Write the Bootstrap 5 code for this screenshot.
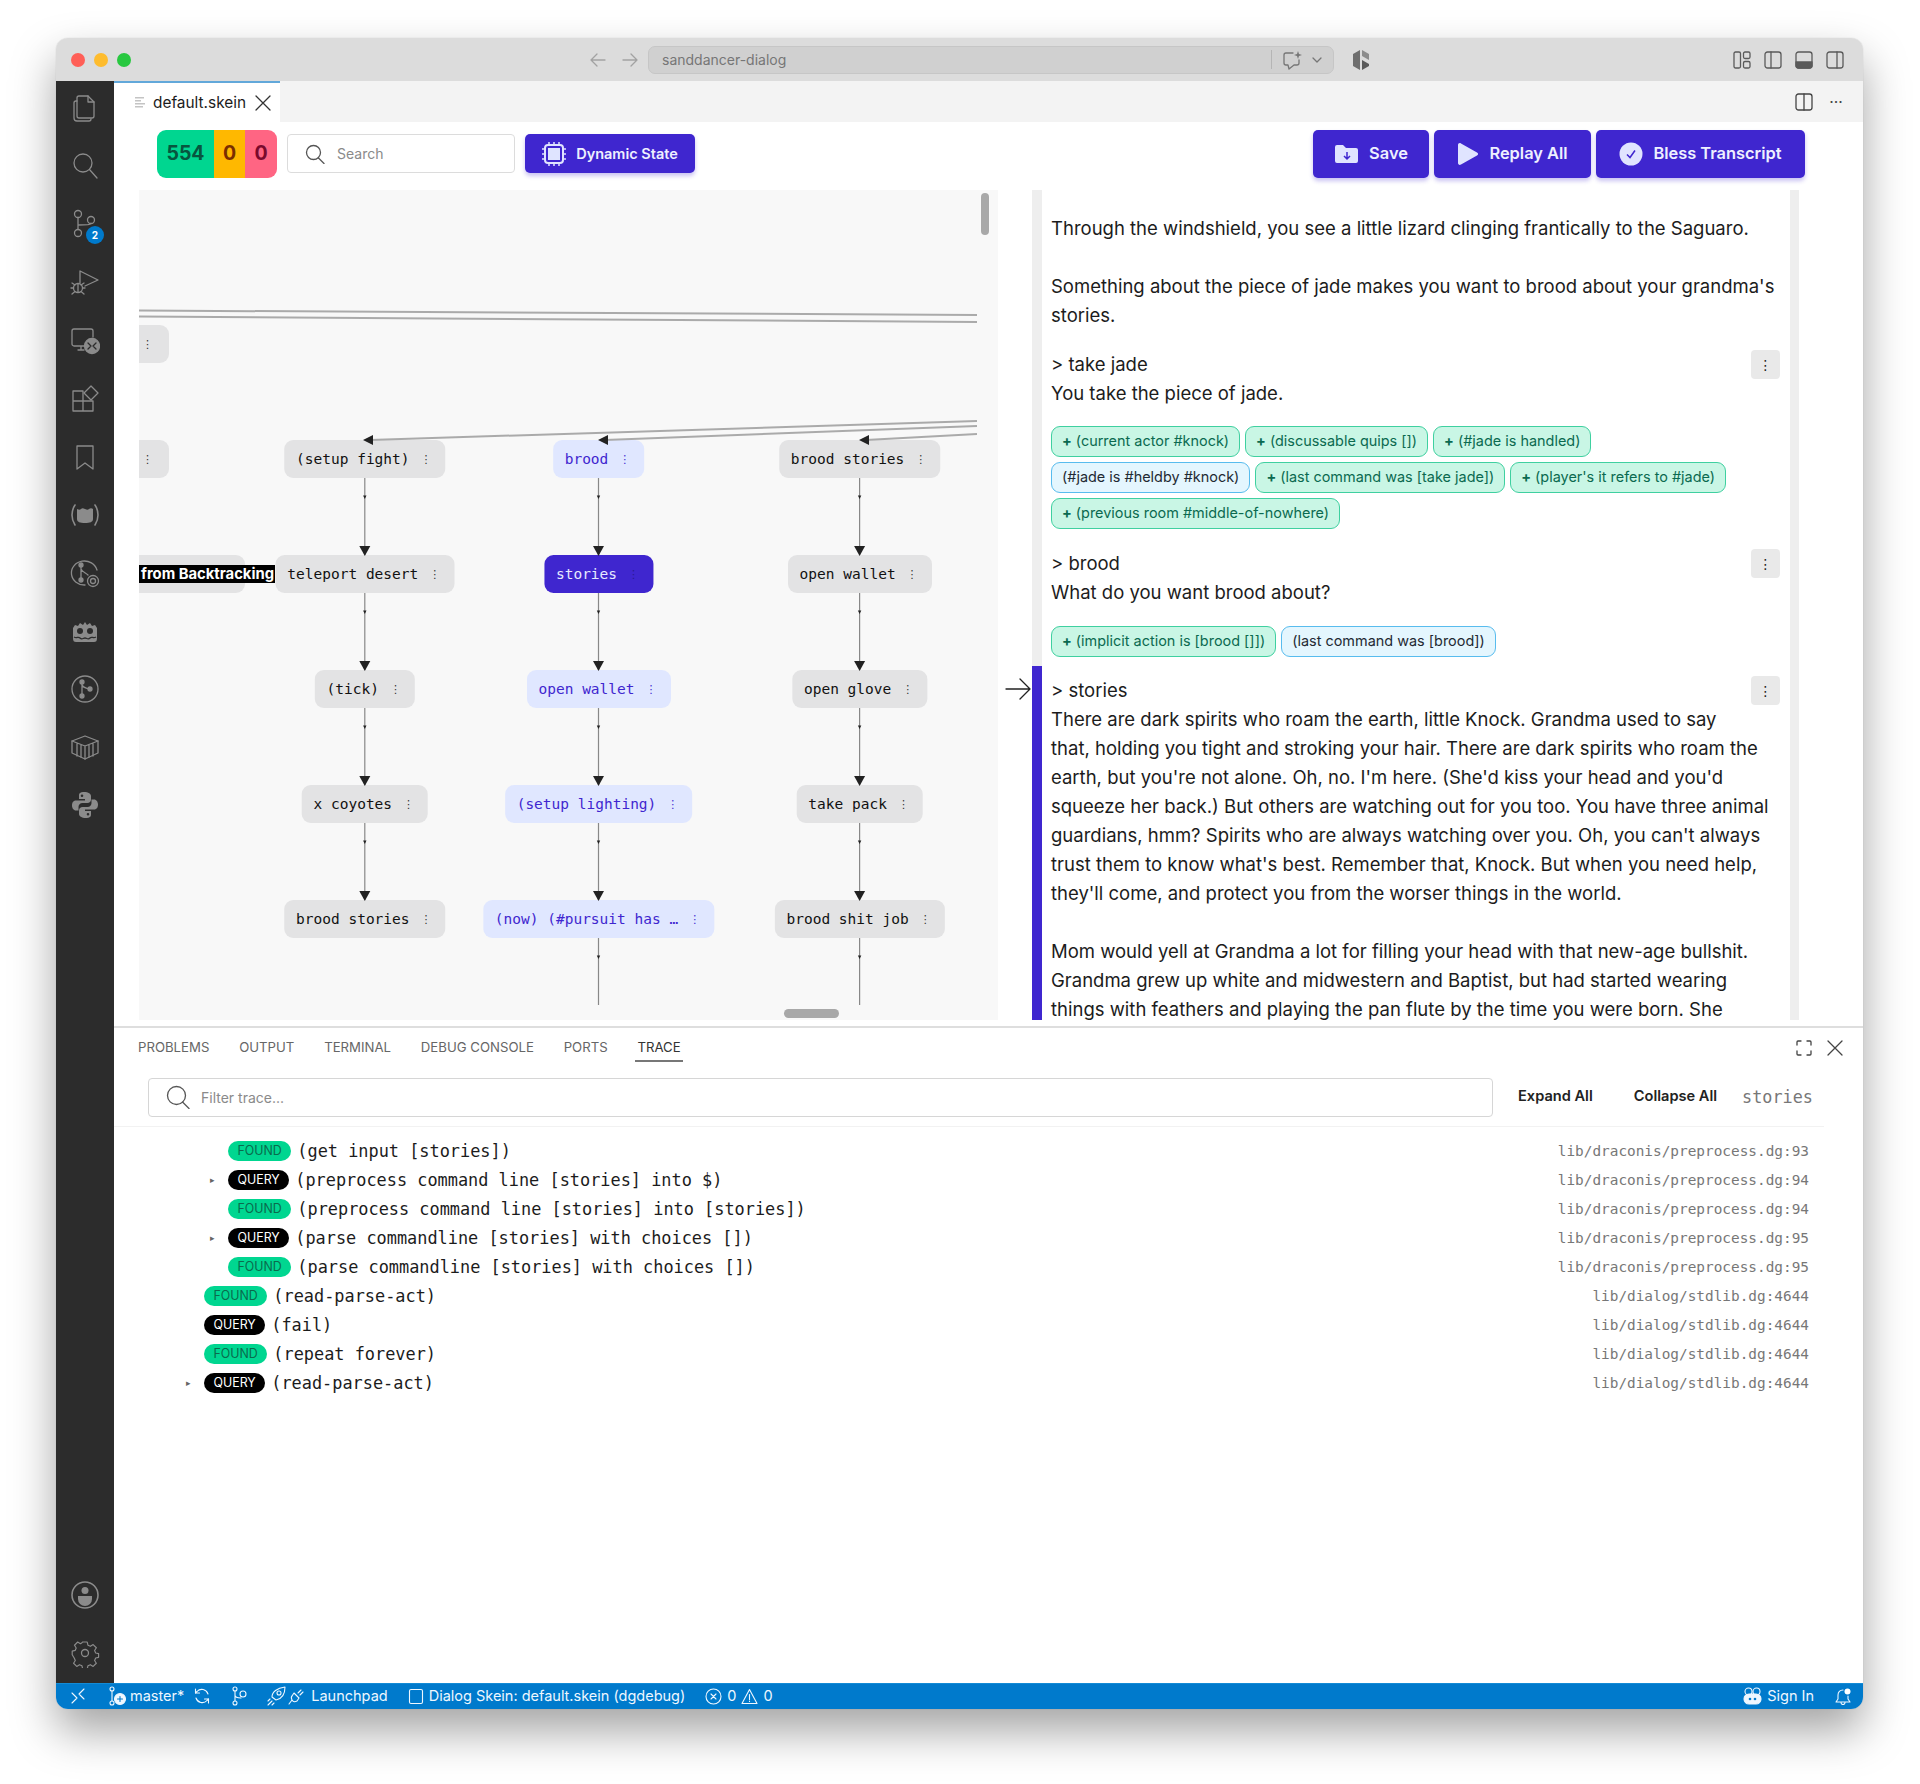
<!DOCTYPE html>
<html lang="en">
<head>
  <meta charset="UTF-8">
  <meta name="viewport" content="width=device-width, initial-scale=1.0">
  <title>default.skein</title>
  <link rel="stylesheet" href="https://cdn.jsdelivr.net/npm/bootstrap@5.3.0/dist/css/bootstrap.min.css">
  <style>
    html, body { height: 100%; background: #fff; }
    body { font-family: Inter, "Liberation Sans", sans-serif; color: #1c1c1c; padding: 38px 57px 0 56px; overflow: hidden; }

    .app-window { width: 1807px; height: 1671px; border-radius: 12px; overflow: hidden; background: #fff; box-shadow: 0 22px 45px rgba(0,0,0,.36), 0 0 1px rgba(0,0,0,.25); }
    .line-ico { fill: none; stroke: currentColor; stroke-width: 1.3; stroke-linecap: round; stroke-linejoin: round; flex: none; }

    /* title bar */
    .title-bar { height: 43px; background: #dcdcdc; color: #6d6d6d; flex: none; }
    .light { width: 14px; height: 14px; border-radius: 50%; }
    .light-r { background: #ff5f57; margin-left: 15px; }
    .light-y { background: #febc2e; margin-left: 9px; }
    .light-g { background: #28c840; margin-left: 9px; }
    .nav-arrows { margin-left: 458px; gap: 14px; color: #a2a2a2; }
    .title-search { width: 686px; height: 28px; margin-left: 9px; background: #d0d0d0; border: 1px solid #c6c6c6; border-radius: 7px; font-size: 14px; color: #767676; padding: 0 10px 0 13px; }
    .title-sep { width: 1px; height: 19px; background: #b5b5b5; margin-left: auto; margin-right: 9px; }
    .title-logo { margin-left: 18px; }
    .layout-icons { margin-left: auto; margin-right: 19px; gap: 13px; color: #5a5a5a; }

    /* activity bar */
    .activity-bar { width: 58px; background: #2c2c2c; color: #8b8b8b; flex: none; padding-top: 0; }
    .act-item { height: 58.1px; display: flex; align-items: center; justify-content: center; position: relative; }
    .act-item:first-child { margin-top: -2px; }
    .act-badge { position: absolute; left: 30px; top: 31px; width: 18px; height: 18px; border-radius: 50%; background: #007acc; color: #fff; font-size: 10px; font-weight: 700; display: flex; align-items: center; justify-content: center; }

    /* tabs + toolbar */
    .tab-row { height: 41px; background: #f3f3f3; flex: none; }
    .file-tab { width: 166px; background: #fff; border-top: 2px solid #62a8da; font-size: 15.4px; padding-left: 21px; gap: 7px; }
    .tool-row { height: 68px; padding: 0 58px 5px 43px; flex: none; }
    .counter { height: 48px; border-radius: 9px; overflow: hidden; font-weight: 700; font-size: 19.5px; }
    .counter span { display: flex; align-items: center; justify-content: center; }
    .cnt-ok { width: 57px; background: #00d690; color: #07563f; }
    .cnt-warn { width: 31px; background: #ffb800; color: #7a2e00; }
    .cnt-bad { width: 32px; background: #ff6583; color: #7a0a2c; }
    .tool-search { width: 228px; height: 39px; margin-left: 10px; border: 1px solid #dcdcdc; border-radius: 4px; padding-left: 17px; gap: 12px; font-size: 14px; color: #8a8a8a; }
    .prim-btn.btn { background: #3f26cf; border: 0; color: #eef0ff; border-radius: 5px; box-shadow: 0 3px 4px rgba(63,38,207,.28); display: flex; align-items: center; justify-content: center; font-weight: 600; padding: 0; }
    .btn-state.btn { width: 170px; height: 39px; margin-left: 10px; font-size: 14.5px; gap: 10px; }
    .btn-big.btn { height: 48px; font-size: 16.4px; gap: 10px; }

    /* middle split */
    .split { height: 830px; flex: none; }
    .graph { width: 859px; height: 830px; margin-left: 25px; background: #f8f8f8; position: relative; overflow: hidden; flex: none; }
    .graph svg { position: absolute; left: 0; top: 0; z-index: 1; }
    .gnode { position: absolute; height: 38px; transform: translateX(-50%); background: #e3e3e4; border-radius: 9px; display: flex; align-items: center; padding: 0 19px 0 12px; font: 14.5px "DejaVu Sans Mono", monospace; white-space: nowrap; color: #111; }
    .gnode i { font: normal 11px "DejaVu Sans", sans-serif; margin-left: 11px; width: 6px; text-align: center; color: #333; }
    .gnode.on-path { background: #e0e7ff; color: #3f26cf; }
    .gnode.on-path i { color: #3f26cf; }
    .gnode.current { background: #3f26cf; color: #e6e9ff; }
    .gnode.current i { color: #2a1a90; }
    .gnode.stub { transform: none; left: 0; width: 30px; border-radius: 0 9px 9px 0; padding: 0 0 0 3px; }
    .gnode.stub i { margin-left: 0; }
    .gnode.stub.bt-node { width: 106px; }
    .bt-label { position: absolute; left: 0; width: 136px; top: 375px; height: 18px; background: #000; color: #fff; font-size: 14.8px; font-weight: 700; line-height: 18px; padding-left: 2px; white-space: nowrap; overflow: hidden; z-index: 2; }
    .sb-thumb { position: absolute; background: #a8a8a8; border-radius: 5px; z-index: 2; }
    .sb-v { left: 842px; top: 3px; width: 8px; height: 42px; }
    .sb-h { left: 645px; top: 819px; width: 55px; height: 9px; }

    .transcript-wrap { width: 801px; height: 830px; overflow: hidden; padding-left: 34px; flex: none; }
    .transcript { width: 767px; border-left: 10px solid #eeeeee; border-right: 9px solid #eeeeee; height: 830px; padding-top: 24px; font-size: 18.5px; line-height: 29px; }
    .turn { padding: 0 10px 0 9px; }
    .turn p { margin: 0 0 29px; }
    .menu-btn { width: 29px; height: 29px; margin: 0 0 6px 6px; background: #e9e9e9; border-radius: 4px; display: flex; align-items: center; justify-content: center; font: 14px "DejaVu Sans", sans-serif; color: #222; }
    .chips { display: flex; flex-wrap: wrap; gap: 5px 5px; margin-top: 18px; }
    .chips-low { margin-top: 19px; }
    .fact { height: 31px; border: 1.5px solid #3fd0a0; background: #c9f6e5; color: #0b6a50; border-radius: 9px; font-size: 14.45px; line-height: 28px; padding: 0 10px; white-space: nowrap; }
    .fact b { font-weight: 700; margin-right: 4px; }
    .fact.known { background: #e4f6fe; border-color: #58bcee; color: #1f2a33; }
    .turn-active { position: relative; margin-left: -10px; border-left: 10px solid #3f26cf; padding-top: 10px; padding-left: 9px; padding-bottom: 40px; margin-top: 9px; }
    .turn-arrow { position: absolute; left: -37px; top: 12px; color: #222; }

    /* bottom panel */
    .panel { border-top: 2px solid #dedede; margin-top: 6px; flex: 1 1 auto; min-height: 0; position: relative; }
    .panel-tabs { height: 40px; padding-left: 24px; gap: 29.8px; font-size: 13.2px; color: #666; flex: none; }
    .panel-tabs .tab-on { color: #333; position: relative; }
    .panel-tabs .tab-on::after { content: ""; position: absolute; left: -2px; right: -2px; bottom: -4px; height: 2px; background: #777; }
    .panel-actions { margin-left: auto; margin-right: 20px; gap: 15px; color: #444; }
    .filter-row { padding: 10px 0; border-bottom: 1px solid #f2f2f2; margin: 0 39px 0 0; padding-left: 34px; height: 59px; }
    .filter-box { width: 1345px; height: 39px; border: 1px solid #d6d6d6; border-radius: 4px; padding-left: 17px; gap: 11px; font-size: 14px; color: #8a8a8a; }
    .filter-btn { font-size: 14.6px; font-weight: 600; color: #222; }
    .filter-word { font: 16.8px "DejaVu Sans Mono", monospace; color: #777; margin-left: 25px; }
    .trace-list { padding-top: 10px; padding-right: 54px; }
    .trace-row { height: 28.9px; display: flex; align-items: center; font: 16.9px "DejaVu Sans Mono", monospace; white-space: nowrap; }
    .lvl-1 { padding-left: 114px; }
    .lvl-0 { padding-left: 90px; }
    .row-caret { width: 24px; flex: none; display: block; margin-left: -24px; color: #666; font-size: 9px; padding-left: 6px; font-family: "DejaVu Sans", sans-serif; }
    .trace-badge.badge { font: 12.4px Inter, sans-serif; height: 20px; line-height: 20px; padding: 0 9.5px; margin-right: 6px; }
    .trace-badge.found { background: #00d690; color: #0a6b4d; }
    .trace-badge.query { background: #000; color: #fff; }
    .trace-loc { margin-left: auto; font-size: 14.4px; color: #777; }

    /* status bar */
    .status-bar { height: 26px; background: #007acc; color: #eef7ff; font-size: 14.5px; flex: none; padding-left: 14px; padding-right: 11px; box-shadow: inset 0 1px 0 #5fd0ff33; }
    .status-bar svg { stroke-width: 1.1; }
  </style>
</head>
<body>
  <div class="app-window d-flex flex-column">

    <!-- title bar -->
    <div class="title-bar d-flex align-items-center">
      <span class="light light-r"></span><span class="light light-y"></span><span class="light light-g"></span>
      <div class="nav-arrows d-flex">
        <svg class="line-ico" width="18" height="18" viewBox="0 0 18 18"><path d="M16 9H2M8 3L2 9l6 6"/></svg>
        <svg class="line-ico" width="18" height="18" viewBox="0 0 18 18"><path d="M2 9h14M10 3l6 6-6 6"/></svg>
      </div>
      <div class="title-search d-flex align-items-center">
        <span>sanddancer-dialog</span>
        <span class="title-sep"></span>
        <svg class="line-ico" width="22" height="22" viewBox="0 0 22 22"><path d="M12 4H5a2 2 0 0 0-2 2v8a2 2 0 0 0 2 2h2l1 4 5-4h3a2 2 0 0 0 2-2v-3"/><path d="M17 2l1 3 3 1-3 1-1 3-1-3-3-1 3-1z" fill="currentColor" stroke="none"/></svg>
        <svg class="line-ico ms-2" width="12" height="12" viewBox="0 0 12 12"><path d="M2 4l4 4 4-4"/></svg>
      </div>
      <svg class="title-logo" width="18" height="22" viewBox="0 0 18 22"><path d="M8 1L1 5v12l7 4z" fill="#6e6e6e"/><path d="M10 1l7 4v6l-7-4z" fill="#8d8d8d"/><path d="M10 11l7 4v2l-7 4z" fill="#5b5b5b"/></svg>
      <div class="layout-icons d-flex">
        <svg class="line-ico" width="18" height="18" viewBox="0 0 18 18"><rect x="1" y="1" width="6.5" height="16" rx="1.5"/><rect x="10.5" y="1" width="6.5" height="6.5" rx="1.5"/><rect x="10.5" y="10.5" width="6.5" height="6.5" rx="1.5"/></svg>
        <svg class="line-ico" width="18" height="18" viewBox="0 0 18 18"><rect x="1" y="1" width="16" height="16" rx="2.5"/><path d="M7 1v16"/></svg>
        <svg class="line-ico" width="18" height="18" viewBox="0 0 18 18"><rect x="1" y="1" width="16" height="16" rx="2.5"/><path d="M1 11h16v3.5a2.5 2.5 0 0 1-2.5 2.5h-11A2.5 2.5 0 0 1 1 14.5z" fill="currentColor"/></svg>
        <svg class="line-ico" width="18" height="18" viewBox="0 0 18 18"><rect x="1" y="1" width="16" height="16" rx="2.5"/><path d="M11 1v16"/></svg>
      </div>
    </div>

    <div class="d-flex flex-grow-1" style="min-height:0">
      <!-- activity bar -->
      <div class="activity-bar d-flex flex-column">
        <div class="act-item"><svg class="line-ico" width="30" height="30" viewBox="0 0 30 30"><path d="M9 3h9l6 6v14a2 2 0 0 1-2 2H9a2 2 0 0 1-2-2V5a2 2 0 0 1 2-2z"/><path d="M18 3v6h6"/><path d="M7 8H6a2 2 0 0 0-2 2v15a3 3 0 0 0 3 3h12a2 2 0 0 0 2-2"/></svg></div>
        <div class="act-item"><svg class="line-ico" width="30" height="30" viewBox="0 0 30 30"><circle cx="13" cy="12" r="9"/><path d="M19.5 18.500L27 27"/></svg></div>
        <div class="act-item"><svg class="line-ico" width="30" height="30" viewBox="0 0 30 30"><circle cx="8" cy="5" r="3.500"/><circle cx="8" cy="24" r="3.500"/><circle cx="21" cy="11" r="3.500"/><path d="M8 8.500v12M8 16c8 0 13-.500 13-1.500"/></svg><span class="act-badge">2</span></div>
        <div class="act-item"><svg class="line-ico" width="30" height="30" viewBox="0 0 30 30"><path d="M10 16V4l18 9-13 6"/><circle cx="8" cy="21" r="4.500"/><path d="M2 16l3 2M14 16l-3 2M1 21h2.500M15 21h-2M2 27l3-2.500M14 27l-3-2.500M8 16.500V25"/></svg></div>
        <div class="act-item"><svg class="line-ico" width="30" height="30" viewBox="0 0 30 30"><path d="M15 21H4a2 2 0 0 1-2-2V6a2 2 0 0 1 2-2h17a2 2 0 0 1 2 2v6M8 25h6M11 21v4"/><circle cx="22" cy="21" r="7.500" fill="#8b8b8b"/><path d="M18 18l3 3-3 3M26 18l-3 3 3 3" stroke="#2c2c2c"/></svg></div>
        <div class="act-item"><svg class="line-ico" width="30" height="30" viewBox="0 0 30 30"><path d="M3 7h10v10H3zM3 17h10v10H3zM13 17h10v10H13z"/><path d="M21 2l7 7-7 7-7-7z"/></svg></div>
        <div class="act-item"><svg class="line-ico" width="30" height="30" viewBox="0 0 30 30"><path d="M7 4h16v23l-8-6-8 6z"/></svg></div>
        <div class="act-item"><svg width="30" height="30" viewBox="0 0 30 30"><path d="M5 5c-4 6-4 14 0 20M25 5c4 6 4 14 0 20" fill="none" stroke="currentColor" stroke-width="1.6" stroke-linecap="round"/><path d="M7 9c2 1 3 1 4 0s2-1 4 0 3 1 4 0 3-1 4 0v10c0 3-3 4-8 4s-8-1-8-4z" fill="currentColor"/></svg></div>
        <div class="act-item"><svg class="line-ico" width="30" height="30" viewBox="0 0 30 30"><path d="M27 12A13 12 0 1 0 15 27"/><circle cx="11" cy="7" r="2" fill="currentColor"/><circle cx="11" cy="22" r="2" fill="currentColor"/><path d="M11 9v11M11 11c1 3 5 4 7 6"/><circle cx="23" cy="23" r="5.500"/><circle cx="23" cy="23" r="2.500"/></svg></div>
        <div class="act-item"><svg width="30" height="30" viewBox="0 0 30 30"><path d="M3 12l2-3 3 1 2-3 3 2 2-3 2 3 3-2 2 3 3-1 2 3v10c0 3-1 4-3 4H6c-2 0-3-1-3-4z" fill="currentColor"/><circle cx="10" cy="15" r="3" fill="#2c2c2c"/><circle cx="20" cy="15" r="3" fill="#2c2c2c"/><path d="M4 21c3 2 4-1 6 1s3 0 5 0 3 2 5 0 3 1 6-1" fill="none" stroke="#2c2c2c" stroke-width="1.3"/></svg></div>
        <div class="act-item"><svg class="line-ico" width="30" height="30" viewBox="0 0 30 30"><circle cx="15" cy="15" r="13"/><circle cx="12" cy="8" r="2" fill="currentColor"/><circle cx="12" cy="22" r="2" fill="currentColor"/><circle cx="20" cy="15" r="2" fill="currentColor"/><path d="M12 10v10M12 11c1 3 5 3 7 4"/></svg></div>
        <div class="act-item"><svg class="line-ico" width="30" height="30" viewBox="0 0 30 30"><path d="M2 9l13-5 13 5v12l-13 6-13-6z"/><path d="M2 9l13 5 13-5M15 14v13M7 12v12M11 13v12M19 13v12M23 12v12"/></svg></div>
        <div class="act-item"><svg width="30" height="30" viewBox="0 0 30 30" fill="currentColor"><path d="M15 2c-6 0-6 2-6 4v3h6v1.500H6c-3 0-4 2.500-4 5s1.500 5 4 5h2.500V17c0-2 1.500-4 4-4h5c2 0 3.500-1.500 3.500-3.500V6c0-2-2.500-4-7-4zm-3 2.500a1.300 1.300 0 1 1 0 2.600 1.300 1.300 0 0 1 0-2.600z"/><path d="M15 28c6 0 6-2 6-4v-3h-6v-1.500h9c3 0 4-2.500 4-5s-1.500-5-4-5h-2.500V13c0 2-1.500 4-4 4h-5c-2 0-3.500 1.500-3.500 3.500V24c0 2 2.500 4 7 4zm3-2.500a1.300 1.300 0 1 1 0-2.600 1.300 1.300 0 0 1 0 2.600z"/></svg></div>
        <div class="act-item mt-auto"><svg width="30" height="30" viewBox="0 0 30 30"><circle cx="15" cy="15" r="13" fill="none" stroke="currentColor" stroke-width="1.6"/><circle cx="15" cy="10.500" r="3.500" fill="currentColor"/><path d="M8 16h14v3a7 7 0 0 1-14 0z" fill="currentColor"/></svg></div>
        <div class="act-item" style="margin-bottom:1px"><svg class="line-ico" width="30" height="30" viewBox="0 0 30 30"><circle cx="15" cy="15" r="3.500"/><path d="M12.500 3h5l.8 3.500 2.700 1.200 3-1.900 3.500 3.500-1.900 3 1.200 2.700 3.200.800v4l-3.200.8-1.200 2.700 1.900 3-3.500 3.500-3-1.900-2.700 1.200-.8 3.400h-5l-.8-3.400-2.700-1.200-3 1.900-3.500-3.500 1.900-3-1.200-2.700L1 17v-4l3.200-.8 1.200-2.700-1.900-3L7 3l3 1.900 1.700-1.200z" transform="translate(1.300 1.300) scale(.91)"/></svg></div>
      </div>

      <!-- editor + panel -->
      <div class="flex-grow-1 d-flex flex-column" style="min-width:0">
        <div class="tab-row d-flex justify-content-between">
          <div class="file-tab d-flex align-items-center">
            <svg width="11" height="12" viewBox="0 0 11 12" fill="#c4c4c4"><path d="M0 0h9v1.500H0zM0 3h6v1.500H0zM0 6h10v1.500H0zM0 9h8v1.500H0z"/></svg>
            <span>default.skein</span>
            <svg class="line-ico" width="16" height="16" viewBox="0 0 16 16" style="stroke:#333;margin-left:2px"><path d="M1 1l14 14M15 1L1 15"/></svg>
          </div>
          <div class="d-flex align-items-center" style="gap:16px;padding-right:20px;color:#444">
            <svg class="line-ico" width="18" height="18" viewBox="0 0 18 18"><rect x="1" y="1" width="16" height="16" rx="2.500"/><path d="M9 1v16"/></svg>
            <span style="font-size:12px;font-weight:700;letter-spacing:.5px;line-height:1;margin-top:-5px">...</span>
          </div>
        </div>

        <div class="tool-row d-flex align-items-center">
          <div class="counter d-flex"><span class="cnt-ok">554</span><span class="cnt-warn">0</span><span class="cnt-bad">0</span></div>
          <div class="tool-search d-flex align-items-center">
            <svg class="line-ico" width="20" height="20" viewBox="0 0 20 20" style="stroke:#555"><circle cx="8.500" cy="8.500" r="7"/><path d="M13.500 14L19 19.500"/></svg>
            <span>Search</span>
          </div>
          <button class="btn prim-btn btn-state" type="button">
            <svg width="24" height="24" viewBox="0 0 24 24"><rect x="3" y="3" width="18" height="18" rx="3" fill="none" stroke="#e0e4ff" stroke-width="2"/><rect x="6" y="6" width="12" height="12" fill="#dfe4ff"/><path d="M7 0v3M12 0v3M17 0v3M7 21v3M12 21v3M17 21v3M0 7h3M0 12h3M0 17h3M21 7h3M21 12h3M21 17h3" stroke="#e0e4ff" stroke-width="1.500"/></svg>
            <span>Dynamic State</span>
          </button>
          <div class="ms-auto d-flex" style="gap:5px">
            <button class="btn prim-btn btn-big" type="button" style="width:116px">
              <svg width="25" height="24" viewBox="0 0 25 24"><path d="M1 5a2 2 0 0 1 2-2h6l3 3h10a2 2 0 0 1 2 2v11a2 2 0 0 1-2 2H3a2 2 0 0 1-2-2z" fill="#e0e4ff"/><path d="M13 10v7M10 14l3 3 3-3" fill="none" stroke="#3f26cf" stroke-width="1.500"/></svg>
              <span>Save</span>
            </button>
            <button class="btn prim-btn btn-big" type="button" style="width:157px">
              <svg width="22" height="24" viewBox="0 0 22 24"><path d="M1 3c0-1.500 1.500-2.500 3-1.500l16 9c1.500 1 1.500 2 0 3l-16 9C2.500 23.500 1 22.500 1 21z" fill="#e0e4ff"/></svg>
              <span>Replay All</span>
            </button>
            <button class="btn prim-btn btn-big" type="button" style="width:209px">
              <svg width="24" height="24" viewBox="0 0 24 24"><circle cx="12" cy="12" r="11.500" fill="#e0e4ff"/><path d="M8 12.500l3 3 5-7" fill="none" stroke="#3f26cf" stroke-width="1.500"/></svg>
              <span>Bless Transcript</span>
            </button>
          </div>
        </div>

        <div class="split d-flex">
          <div class="graph" id="graph">
            <span class="sb-thumb sb-v"></span>
            <span class="sb-thumb sb-h"></span>
          </div>

          <div class="transcript-wrap">
            <div class="transcript">
              <div class="turn">
                <p>Through the windshield, you see a little lizard clinging frantically to the Saguaro.</p>
                <p style="margin-bottom:20px">Something about the piece of jade makes you want to brood about your grandma's stories.</p>
                <span class="menu-btn float-end">⋮</span>
                <div>&gt; take jade</div>
                <div>You take the piece of jade.</div>
                <div class="chips">
                  <span class="fact"><b>+</b>(current actor #knock)</span>
                  <span class="fact"><b>+</b>(discussable quips [])</span>
                  <span class="fact"><b>+</b>(#jade is handled)</span>
                  <span class="fact known">(#jade is #heldby #knock)</span>
                  <span class="fact"><b>+</b>(last command was [take jade])</span>
                  <span class="fact"><b>+</b>(player's it refers to #jade)</span>
                  <span class="fact"><b>+</b>(previous room #middle-of-nowhere)</span>
                </div>
              </div>
              <div class="turn" style="margin-top:20px">
                <span class="menu-btn float-end">⋮</span>
                <div>&gt; brood</div>
                <div>What do you want brood about?</div>
                <div class="chips chips-low">
                  <span class="fact"><b>+</b>(implicit action is [brood []])</span>
                  <span class="fact known">(last command was [brood])</span>
                </div>
              </div>
              <div class="turn turn-active">
                <svg class="turn-arrow line-ico" width="26" height="22" viewBox="0 0 26 22"><path d="M1 11h24M15 1l10 10-10 10"/></svg>
                <span class="menu-btn float-end">⋮</span>
                <div>&gt; stories</div>
                <p>There are dark spirits who roam the earth, little Knock. Grandma used to say that, holding you tight and stroking your hair. There are dark spirits who roam the earth, but you're not alone. Oh, no. I'm here. (She'd kiss your head and you'd squeeze her back.) But others are watching out for you too. You have three animal guardians, hmm? Spirits who are always watching over you. Oh, you can't always trust them to know what's best. Remember that, Knock. But when you need help, they'll come, and protect you from the worser things in the world.</p>
                <p>Mom would yell at Grandma a lot for filling your head with that new-age bullshit. Grandma grew up white and midwestern and Baptist, but had started wearing things with feathers and playing the pan flute by the time you were born. She</p>
              </div>
            </div>
          </div>
        </div>

        <div class="panel d-flex flex-column">
          <div class="panel-tabs d-flex align-items-center">
            <span>PROBLEMS</span><span>OUTPUT</span><span>TERMINAL</span><span>DEBUG CONSOLE</span><span>PORTS</span><span class="tab-on">TRACE</span>
            <div class="panel-actions d-flex align-items-center">
              <svg class="line-ico" width="16" height="16" viewBox="0 0 16 16"><path d="M1 5V2a1 1 0 0 1 1-1h3M11 1h3a1 1 0 0 1 1 1v3M15 11v3a1 1 0 0 1-1 1h-3M5 15H2a1 1 0 0 1-1-1v-3"/></svg>
              <svg class="line-ico" width="16" height="16" viewBox="0 0 16 16"><path d="M1 1l14 14M15 1L1 15"/></svg>
            </div>
          </div>
          <div class="filter-row d-flex align-items-center">
            <div class="filter-box d-flex align-items-center">
              <svg class="line-ico" width="24" height="24" viewBox="0 0 24 24" style="stroke:#555"><circle cx="10.500" cy="10.500" r="9"/><path d="M16.500 17L23 23.500"/></svg>
              <span>Filter trace...</span>
            </div>
            <span class="filter-btn" style="margin-left:25px">Expand All</span>
            <span class="filter-btn" style="margin-left:41px">Collapse All</span>
            <span class="filter-word">stories</span>
          </div>
          <div class="trace-list">
            <div class="trace-row lvl-1"><span class="badge rounded-pill trace-badge found">FOUND</span>(get input [stories])<span class="trace-loc">lib/draconis/preprocess.dg:93</span></div>
            <div class="trace-row lvl-1"><span class="row-caret">▸</span><span class="badge rounded-pill trace-badge query">QUERY</span>(preprocess command line [stories] into $)<span class="trace-loc">lib/draconis/preprocess.dg:94</span></div>
            <div class="trace-row lvl-1"><span class="badge rounded-pill trace-badge found">FOUND</span>(preprocess command line [stories] into [stories])<span class="trace-loc">lib/draconis/preprocess.dg:94</span></div>
            <div class="trace-row lvl-1"><span class="row-caret">▸</span><span class="badge rounded-pill trace-badge query">QUERY</span>(parse commandline [stories] with choices [])<span class="trace-loc">lib/draconis/preprocess.dg:95</span></div>
            <div class="trace-row lvl-1"><span class="badge rounded-pill trace-badge found">FOUND</span>(parse commandline [stories] with choices [])<span class="trace-loc">lib/draconis/preprocess.dg:95</span></div>
            <div class="trace-row lvl-0"><span class="badge rounded-pill trace-badge found">FOUND</span>(read-parse-act)<span class="trace-loc">lib/dialog/stdlib.dg:4644</span></div>
            <div class="trace-row lvl-0"><span class="badge rounded-pill trace-badge query">QUERY</span>(fail)<span class="trace-loc">lib/dialog/stdlib.dg:4644</span></div>
            <div class="trace-row lvl-0"><span class="badge rounded-pill trace-badge found">FOUND</span>(repeat forever)<span class="trace-loc">lib/dialog/stdlib.dg:4644</span></div>
            <div class="trace-row lvl-0"><span class="row-caret">▸</span><span class="badge rounded-pill trace-badge query">QUERY</span>(read-parse-act)<span class="trace-loc">lib/dialog/stdlib.dg:4644</span></div>
          </div>
        </div>
      </div>
    </div>

    <!-- status bar -->
    <div class="status-bar d-flex align-items-center">
      <svg class="line-ico" width="16" height="16" viewBox="0 0 16 16"><path d="M2 5l5 5-5 5M14 1L9 6l5 5"/></svg>
      <svg class="line-ico" style="margin-left:22px" width="19" height="20" viewBox="0 0 19 20"><circle cx="4" cy="3" r="2"/><circle cx="4" cy="17" r="2"/><path d="M4 5v10"/><circle cx="12" cy="13" r="5.500" fill="currentColor"/><path d="M12 10.500v5M9.500 13h5" stroke="#007acc"/></svg>
      <span style="margin-left:3px">master*</span>
      <svg class="line-ico" style="margin-left:10px" width="16" height="16" viewBox="0 0 16 16"><path d="M14 6A6.500 6.500 0 0 0 3 3.500L1.500 5M2 10a6.500 6.500 0 0 0 11 2.500L14.500 11"/><path d="M1.500 1v4h4M14.500 15v-4h-4"/></svg>
      <svg class="line-ico" style="margin-left:22px" width="15" height="20" viewBox="0 0 15 20"><circle cx="3" cy="3" r="2"/><circle cx="3" cy="17" r="2"/><path d="M3 5v10M3 9c0 2 3 3 6 3"/><circle cx="11" cy="8" r="3"/></svg>
      <svg class="line-ico" style="margin-left:20px" width="19" height="20" viewBox="0 0 19 20"><path d="M5 11C5 6 10 2 18 1c0 8-4 12-9 13z"/><circle cx="12" cy="7" r="2"/><path d="M1 19l4-4M1 15l2-2M5 19l2-2"/></svg>
      <svg class="line-ico" style="margin-left:2px" width="16" height="18" viewBox="0 0 16 18"><path d="M6 6l5 5-2 3c-2 1-4 1-5-1s-1-3 0-4zM4 13l-3 4M10 6l3-3M12 8l3-3"/></svg>
      <span style="margin-left:7px">Launchpad</span>
      <svg class="line-ico" style="margin-left:20px" width="16" height="17" viewBox="0 0 16 17"><rect x="1.500" y="1.500" width="13" height="14" rx="1.500"/></svg>
      <span style="margin-left:5px">Dialog Skein: default.skein (dgdebug)</span>
      <svg class="line-ico" style="margin-left:20px" width="17" height="17" viewBox="0 0 17 17"><circle cx="8.500" cy="8.500" r="7.500"/><path d="M6 6l5 5M11 6l-5 5"/></svg>
      <span style="margin-left:5px">0</span>
      <svg class="line-ico" style="margin-left:5px" width="17" height="17" viewBox="0 0 17 17"><path d="M8.500 1.500l7.500 14H1z"/><path d="M8.500 6.500v5M8.500 13v.5"/></svg>
      <span style="margin-left:5px">0</span>
      <svg class="ms-auto" width="19" height="18" viewBox="0 0 19 18" fill="none" stroke="currentColor" stroke-width="1.500"><circle cx="5.500" cy="4.500" r="3.500"/><circle cx="13.500" cy="4.500" r="3.500"/><rect x="1" y="7" width="17" height="10" rx="5" fill="currentColor"/><circle cx="7" cy="12" r="1.300" fill="#007acc" stroke="none"/><circle cx="12" cy="12" r="1.300" fill="#007acc" stroke="none"/></svg>
      <span style="margin-left:5px">Sign In</span>
      <svg class="line-ico" style="margin-left:21px" width="17" height="17" viewBox="0 0 17 17"><path d="M8 2c-3 0-5 2-5 5v4l-2 3h14l-2-3V8M6 14.500a2 2 0 0 0 4 0"/><circle cx="12.500" cy="3.500" r="3" fill="#fff" stroke="none"/></svg>
    </div>
  </div>

  <script src="https://cdn.jsdelivr.net/npm/bootstrap@5.3.0/dist/js/bootstrap.bundle.min.js"></script>
  <script>
    // skein graph: nodes sit on a free canvas, edges are drawn over them
    const COLS = [225.8, 459.5, 720.6];
    const ROWS = [250, 365, 480, 595, 710];
    const NODE_H = 38;

    const columns = [
      { kind: '', labels: ['(setup fight)', 'teleport desert', '(tick)', 'x coyotes', 'brood stories'], tail: false },
      { kind: 'on-path', labels: ['brood', 'stories', 'open wallet', '(setup lighting)', '(now) (#pursuit has …'], tail: true },
      { kind: '', labels: ['brood stories', 'open wallet', 'open glove', 'take pack', 'brood shit job'], tail: true }
    ];

    const graph = document.getElementById('graph');
    let svg = '<svg width="838" height="830" viewBox="0 0 838 830">';

    function vArrow(x, y, hw, h) {
      return `<path d="M${x - hw} ${y - h}L${x + hw} ${y - h}L${x} ${y}Z" fill="#222"/>`;
    }

    // long incoming edges from the right
    [[0, 120.500, 838, 125], [0, 126.500, 838, 132]].forEach(([x1, y1, x2, y2]) => {
      svg += `<line x1="${x1}" y1="${y1}" x2="${x2}" y2="${y2}" stroke="#aaa" stroke-width="2"/>`;
    });
    [[231, 250, 838, 231], [466, 250, 838, 236], [727, 250, 838, 244]].forEach(([x1, y1, x2, y2]) => {
      svg += `<line x1="${x1}" y1="${y1}" x2="${x2}" y2="${y2}" stroke="#aaa" stroke-width="2"/>`;
      svg += `<path d="M${x1 - 7} ${y1}L${x1 + 3} ${y1 - 5}L${x1 + 3} ${y1 + 5}Z" fill="#222"/>`;
    });

    COLS.forEach((x, c) => {
      ROWS.forEach((y, r) => {
        if (r < ROWS.length - 1) {
          const next = ROWS[r + 1];
          svg += `<line x1="${x}" y1="${y + NODE_H}" x2="${x}" y2="${next}" stroke="#888" stroke-width="1.200"/>`;
          svg += vArrow(x, y + NODE_H + 21, 1.700, 3.500) + vArrow(x, next + 1, 5.500, 10);
        } else if (columns[c].tail) {
          svg += `<line x1="${x}" y1="${y + NODE_H}" x2="${x}" y2="${y + NODE_H + 67}" stroke="#888" stroke-width="1.200"/>`;
          svg += vArrow(x, y + NODE_H + 21, 1.700, 3.500);
        }
      });
    });
    graph.insertAdjacentHTML('afterbegin', svg + '</svg>');

    function addNode(left, top, label, cls) {
      const el = document.createElement('div');
      el.className = 'gnode ' + cls;
      el.style.left = left + 'px';
      el.style.top = top + 'px';
      el.innerHTML = (label ? `<span>${label}</span>` : '') + '<i>⋮</i>';
      graph.appendChild(el);
      return el;
    }

    // cut-off nodes at the left edge of the canvas
    addNode(0, 135, '', 'stub');
    addNode(0, 250, '', 'stub');
    const bt = addNode(0, 365, '', 'stub bt-node');
    bt.querySelector('i').remove();

    columns.forEach((col, c) => {
      col.labels.forEach((label, r) => {
        let cls = col.kind;
        if (c === 1 && r === 1) cls = 'current';
        addNode(COLS[c], ROWS[r], label, cls);
      });
    });

    const label = document.createElement('div');
    label.className = 'bt-label';
    label.textContent = 'from Backtracking';
    graph.appendChild(label);
  </script>
</body>
</html>
